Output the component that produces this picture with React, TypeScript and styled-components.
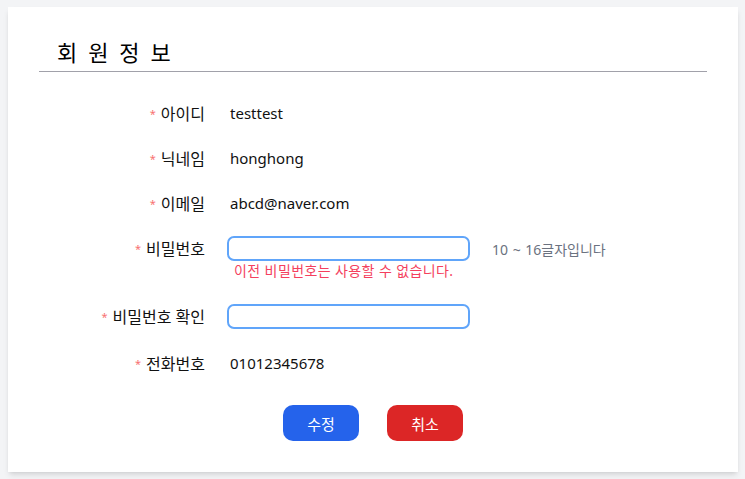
import React from "react";
import styled, { createGlobalStyle } from "styled-components";

const Global = createGlobalStyle`
  html, body { margin: 0; padding: 0; background: #f3f4f6; }
  body { font-family: "Noto Sans", "Noto Sans CJK KR", sans-serif; color: #111827; }
  * { box-sizing: border-box; }
`;

const Card = styled.section`
  margin: 7px 7px 7px 8px;
  width: 730px;
  height: 465px;
  background: #ffffff;
  box-shadow: 0 4px 6px -1px rgba(0,0,0,0.1), 0 2px 4px -2px rgba(0,0,0,0.1);
  padding: 0 31px;
  display: flex;
  flex-direction: column;
`;

const Header = styled.header`
  padding: 30px 0 4px 18px;
  border-bottom: 1px solid #a1a1aa;
`;

const Title = styled.h1`
  margin: 0;
  font-size: 22px;
  line-height: 30px;
  font-weight: 400;
  letter-spacing: 2.6px;
  color: #000;
`;

const Form = styled.div`
  margin-top: 29px;
  display: flex;
  flex-direction: column;
  gap: 21px;
`;

const Row = styled.div<{ $after?: number }>`
  display: grid;
  grid-template-columns: 166px auto;
  column-gap: 22px;
  align-items: start;
  margin-bottom: ${(p) => p.$after ?? 0}px;
`;

const Label = styled.div`
  height: 24px;
  display: flex;
  align-items: center;
  justify-content: flex-end;
  font-size: 16px;
  color: #111;
  white-space: nowrap;
`;

const Star = styled.span`
  color: #f87171;
  font-size: 11px;
  margin-right: 5px;
`;

const Value = styled.div`
  height: 24px;
  display: flex;
  align-items: center;
  padding-left: 3px;
  font-size: 15px;
  color: #111;
`;

const Field = styled.div`
  display: flex;
  flex-direction: column;
`;

const InputLine = styled.div`
  display: flex;
  align-items: center;
  gap: 22px;
`;

const Input = styled.input`
  width: 243px;
  height: 25px;
  border: 2px solid #60a5fa;
  border-radius: 7px;
  outline: none;
  padding: 0 8px;
  font-size: 14px;
  background: #fff;
`;

const Hint = styled.span`
  font-size: 14px;
  color: #6b7280;
  word-spacing: 1px;
`;

const ErrorText = styled.div`
  margin: 1px 0 3px;
  padding-left: 7px;
  line-height: 18px;
  font-size: 14px;
  color: #f43f5e;
  letter-spacing: 0.4px;
`;

const Buttons = styled.div`
  margin-top: 30px;
  display: flex;
  justify-content: center;
  gap: 28px;
`;

const Button = styled.button<{ $tone: "blue" | "red" }>`
  width: 76px;
  height: 36px;
  border: none;
  border-radius: 10px;
  color: #fff;
  font-family: inherit;
  font-size: 15px;
  background: ${(p) => (p.$tone === "blue" ? "#2563eb" : "#dc2626")};
  cursor: pointer;
`;

const ReqLabel = ({ children }: { children: React.ReactNode }) => (
  <Label>
    <Star>*</Star>
    {children}
  </Label>
);

export default function App() {
  return (
    <>
      <Global />
      <Card>
        <Header>
          <Title>회 원 정 보</Title>
        </Header>
        <Form>
          <Row>
            <ReqLabel>아이디</ReqLabel>
            <Value>testtest</Value>
          </Row>
          <Row>
            <ReqLabel>닉네임</ReqLabel>
            <Value>honghong</Value>
          </Row>
          <Row>
            <ReqLabel>이메일</ReqLabel>
            <Value>abcd@naver.com</Value>
          </Row>
          <Row>
            <ReqLabel>비밀번호</ReqLabel>
            <Field>
              <InputLine>
                <Input type="password" />
                <Hint>10 ~ 16글자입니다</Hint>
              </InputLine>
              <ErrorText>이전 비밀번호는 사용할 수 없습니다.</ErrorText>
            </Field>
          </Row>
          <Row $after={1}>
            <ReqLabel>비밀번호 확인</ReqLabel>
            <Field>
              <Input type="password" />
            </Field>
          </Row>
          <Row>
            <ReqLabel>전화번호</ReqLabel>
            <Value>01012345678</Value>
          </Row>
        </Form>
        <Buttons>
          <Button $tone="blue">수정</Button>
          <Button $tone="red">취소</Button>
        </Buttons>
      </Card>
    </>
  );
}
